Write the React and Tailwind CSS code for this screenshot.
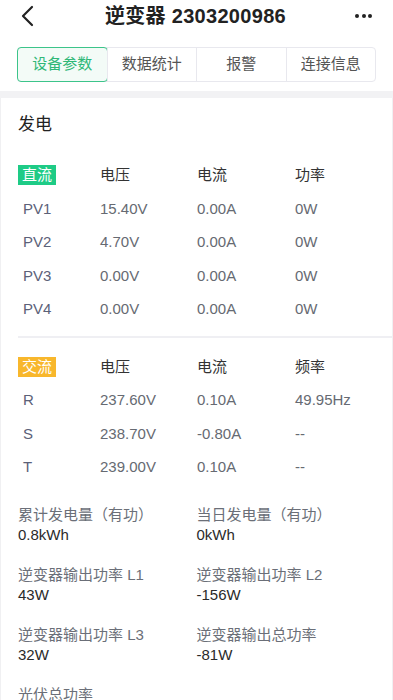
import React from 'react';

const font = { fontFamily: '"Liberation Sans", "Noto Sans CJK SC", sans-serif' };

const tabs = ['设备参数', '数据统计', '报警', '连接信息'];

const dc = [
  ['PV1', '15.40V', '0.00A', '0W'],
  ['PV2', '4.70V', '0.00A', '0W'],
  ['PV3', '0.00V', '0.00A', '0W'],
  ['PV4', '0.00V', '0.00A', '0W'],
];

const ac = [
  ['R', '237.60V', '0.10A', '49.95Hz'],
  ['S', '238.70V', '-0.80A', '--'],
  ['T', '239.00V', '0.10A', '--'],
];

const stats = [
  ['累计发电量（有功）', '0.8kWh'],
  ['当日发电量（有功）', '0kWh'],
  ['逆变器输出功率 L1', '43W'],
  ['逆变器输出功率 L2', '-156W'],
  ['逆变器输出功率 L3', '32W'],
  ['逆变器输出总功率', '-81W'],
  ['光伏总功率', '-'],
];

const Row = ({ cells }) => (
  <div className="grid grid-cols-[82px_97px_98px_1fr] h-[33.5px] items-center text-[15px] text-[#666a72]">
    <span className="pl-[5px] text-[#5b6178]">{cells[0]}</span>
    <span>{cells[1]}</span>
    <span>{cells[2]}</span>
    <span>{cells[3]}</span>
  </div>
);

const Head = ({ tag, color, cols }) => (
  <div className="grid grid-cols-[82px_97px_98px_1fr] h-[33.5px] items-center text-[15px] text-[#333]">
    <span>
      <span className={`inline-block px-[4px] leading-[20px] text-white text-[15px] ${color}`}>{tag}</span>
    </span>
    {cols.map((c) => (
      <span key={c}>{c}</span>
    ))}
  </div>
);

export default function App() {
  return (
    <div className="w-[393px] h-[700px] overflow-hidden bg-white" style={font}>
      <div className="h-[32px] flex items-center justify-between px-[20px]">
        <svg width="16" height="22" viewBox="0 0 16 22" fill="none">
          <path d="M12 2 L3 11 L12 20" stroke="#222" strokeWidth="2.2" strokeLinecap="round" strokeLinejoin="round" />
        </svg>
        <h1 className="text-[20px] font-bold text-[#222] tracking-[0.3px]">逆变器 2303200986</h1>
        <div className="flex gap-[2.5px] pr-[1px]">
          <span className="w-[4px] h-[4px] rounded-full bg-[#222]" />
          <span className="w-[4px] h-[4px] rounded-full bg-[#222]" />
          <span className="w-[4px] h-[4px] rounded-full bg-[#222]" />
        </div>
      </div>
      <div className="px-[17px] pt-[15px] pb-[9px]">
        <div className="flex h-[35px] border border-[#e8e8ee] rounded-[4px] w-[359px]">
          {tabs.map((t, i) => (
            <div
              key={t}
              className={
                i === 0
                  ? 'flex-1 flex items-center justify-center text-[15px] text-[#2fb877] bg-[#f3fbf7] border border-[#3cc48a] rounded-[4px] -m-px'
                  : 'flex-1 flex items-center justify-center text-[15px] text-[#555] border-l border-[#e8e8ee]'
              }
            >
              {t}
            </div>
          ))}
        </div>
      </div>
      <div className="h-[7px] bg-[#f2f2f4]" />
      <div className="border-x border-[#f0f0f2] pl-[17px]">
        <div className="pt-[14px] pb-[21px] text-[17px] text-[#222]">发电</div>
        <Head tag="直流" color="bg-[#1ecb86]" cols={['电压', '电流', '功率']} />
        {dc.map((r) => (
          <Row key={r[0]} cells={r} />
        ))}
        <div className="h-[2px] bg-[#efeff3] mt-[10px] mb-[12px]" />
        <Head tag="交流" color="bg-[#f8b72c]" cols={['电压', '电流', '频率']} />
        {ac.map((r) => (
          <Row key={r[0]} cells={r} />
        ))}
        <div className="grid grid-cols-2 gap-y-[19px] pt-[20px] pr-[17px]">
          {stats.map(([k, v]) => (
            <div key={k} className="flex flex-col">
              <span className="text-[15px] leading-[21px] text-[#6b6f78]">{k}</span>
              <span className="text-[15px] leading-[20px] text-[#2a2a2a]">{v}</span>
            </div>
          ))}
        </div>
      </div>
    </div>
  );
}
